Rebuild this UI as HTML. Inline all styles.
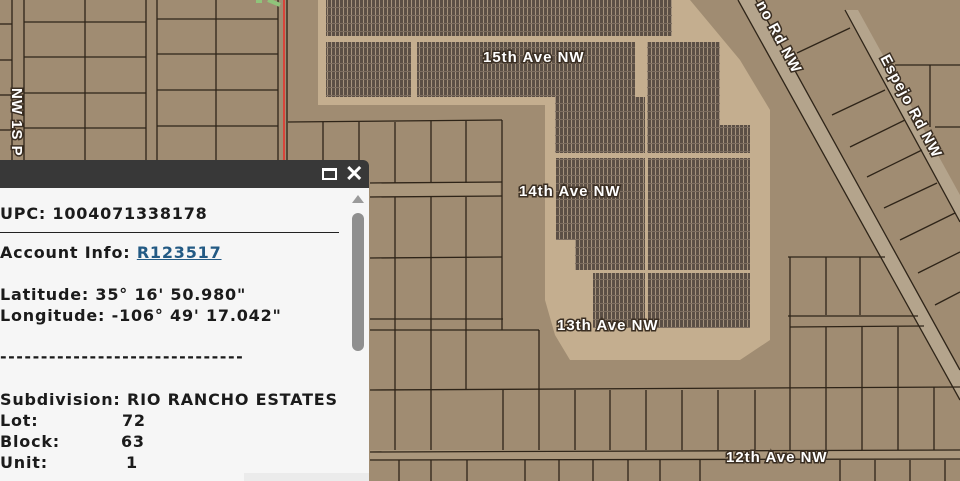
<!DOCTYPE html>
<html><head><meta charset="utf-8"><style>
html,body{margin:0;padding:0;width:960px;height:481px;overflow:hidden;background:#9e8a70;font-family:"Liberation Sans",sans-serif}
svg{position:absolute;left:0;top:0}
.lbl{font-family:"Liberation Sans",sans-serif;font-size:15px;letter-spacing:1px;fill:#fff;stroke:#3a2e22;stroke-width:3px;paint-order:stroke;font-weight:bold}
#pop{position:absolute;left:0;top:160px;width:369px;height:321px}
#hd{position:absolute;left:0;top:0;width:369px;height:28px;background:#383838;border-top-right-radius:6px}
#bd{position:absolute;left:0;top:28px;width:369px;height:293px;background:#f6f6f6}
.t{position:absolute;left:0;font-family:"DejaVu Sans",sans-serif;font-size:16px;letter-spacing:0.8px;font-weight:bold;color:#1b1b1b;line-height:21px;white-space:pre}
a{color:#235a84}
</style></head><body>
<svg width="960" height="481" viewBox="0 0 960 481">
<defs>
<pattern id="pn" width="4" height="8" patternUnits="userSpaceOnUse">
<rect width="4" height="8" fill="#5b4f45"/><rect x="3" width="1" height="8" fill="#a4927c"/><rect y="7" width="4" height="1" fill="#7d6e60"/>
</pattern>
</defs>
<rect width="960" height="481" fill="#a08c72"/>
<path d="M318 0 H690 L740 60 L770 110 L770 340 L740 360 H570 L555 335 L545 300 L545 105 L318 105 Z" fill="#c4ae8f"/>
<g fill="url(#pn)">
<rect x="326" y="0" width="346" height="36"/>
<rect x="326" y="42" width="85" height="55"/>
<rect x="417" y="42" width="218" height="55"/>
<rect x="555" y="97" width="90" height="56"/>
<rect x="647" y="42" width="73" height="84"/>
<rect x="647" y="125" width="103" height="28"/>
<rect x="556" y="158" width="89" height="82"/>
<rect x="575" y="240" width="70" height="30"/>
<rect x="648" y="158" width="102" height="112"/>
<rect x="593" y="273" width="52" height="55"/>
<rect x="648" y="273" width="102" height="55"/>
</g>
<path d="M738 0 L756 0 L960 370 L960 400 Z" fill="#b4a48c"/>
<path d="M845 10 L858 10 L960 195 L960 222 Z" fill="#b4a48c"/>
<rect x="370" y="183" width="130" height="13" fill="#aa977c"/>
<rect x="370" y="450" width="590" height="9" fill="#aa977c"/>
<g stroke="#2e2418" stroke-width="1.3" fill="none">
<line x1="12" y1="0" x2="12" y2="160"/><line x1="24" y1="0" x2="24" y2="160"/>
<line x1="85" y1="0" x2="85" y2="160"/><line x1="146" y1="0" x2="146" y2="160"/>
<line x1="157" y1="0" x2="157" y2="160"/><line x1="216" y1="0" x2="216" y2="160"/>
<line x1="278" y1="0" x2="278" y2="160"/><line x1="287" y1="0" x2="287" y2="160"/>
<line x1="24" y1="22" x2="146" y2="22"/><line x1="24" y1="57" x2="146" y2="57"/><line x1="24" y1="93" x2="146" y2="93"/><line x1="24" y1="128" x2="146" y2="128"/>
<line x1="157" y1="19" x2="278" y2="19"/><line x1="157" y1="54" x2="278" y2="54"/><line x1="157" y1="90" x2="278" y2="90"/><line x1="157" y1="126" x2="278" y2="126"/>
<line x1="0" y1="24" x2="12" y2="24"/><line x1="0" y1="60" x2="12" y2="60"/><line x1="0" y1="95" x2="12" y2="95"/><line x1="0" y1="130" x2="12" y2="130"/>
<line x1="288" y1="122" x2="502" y2="120"/>
<line x1="323" y1="122" x2="323" y2="160"/><line x1="359" y1="122" x2="359" y2="160"/><line x1="395" y1="122" x2="395" y2="183"/><line x1="431" y1="121" x2="431" y2="183"/><line x1="466" y1="121" x2="466" y2="183"/><line x1="502" y1="120" x2="502" y2="330"/>
<line x1="370" y1="183" x2="502" y2="182"/><line x1="370" y1="197" x2="502" y2="196"/>
<line x1="395" y1="197" x2="395" y2="450"/><line x1="431" y1="197" x2="431" y2="450"/><line x1="466" y1="197" x2="466" y2="390"/>
<line x1="370" y1="258" x2="502" y2="257"/>
<line x1="370" y1="319" x2="503" y2="319"/><line x1="370" y1="330" x2="539" y2="330"/>
<line x1="539" y1="330" x2="539" y2="450"/>
<line x1="370" y1="390" x2="960" y2="387"/>
<line x1="370" y1="452" x2="960" y2="450"/><line x1="370" y1="460" x2="960" y2="459"/>
<line x1="503" y1="390" x2="503" y2="450"/><line x1="575" y1="390" x2="575" y2="450"/><line x1="610" y1="390" x2="610" y2="450"/><line x1="646" y1="390" x2="646" y2="450"/><line x1="682" y1="390" x2="682" y2="450"/><line x1="718" y1="390" x2="718" y2="450"/><line x1="755" y1="390" x2="755" y2="450"/><line x1="790" y1="327" x2="790" y2="450"/><line x1="826" y1="327" x2="826" y2="450"/><line x1="862" y1="327" x2="862" y2="450"/><line x1="898" y1="327" x2="898" y2="450"/><line x1="934" y1="387" x2="934" y2="450"/>
<line x1="790" y1="257" x2="790" y2="327"/><line x1="826" y1="257" x2="826" y2="315"/><line x1="860" y1="257" x2="860" y2="315"/>
<line x1="788" y1="257" x2="885" y2="257"/><line x1="788" y1="316" x2="918" y2="316"/><line x1="790" y1="327" x2="924" y2="326"/>
<line x1="399" y1="460" x2="399" y2="481"/><line x1="431" y1="460" x2="431" y2="481"/><line x1="467" y1="460" x2="467" y2="481"/><line x1="525" y1="460" x2="525" y2="481"/><line x1="559" y1="460" x2="559" y2="481"/><line x1="593" y1="460" x2="593" y2="481"/><line x1="628" y1="460" x2="628" y2="481"/><line x1="660" y1="460" x2="660" y2="481"/><line x1="700" y1="460" x2="700" y2="481"/><line x1="840" y1="460" x2="840" y2="481"/><line x1="875" y1="460" x2="875" y2="481"/><line x1="910" y1="460" x2="910" y2="481"/><line x1="945" y1="460" x2="945" y2="481"/>
<line x1="738" y1="0" x2="960" y2="400"/><line x1="756" y1="0" x2="960" y2="370"/>
<line x1="845" y1="10" x2="960" y2="222"/>
<line x1="797" y1="53" x2="850" y2="28"/><line x1="832" y1="115" x2="885" y2="90"/><line x1="850" y1="147" x2="905" y2="120"/><line x1="867" y1="177" x2="922" y2="150"/><line x1="884" y1="208" x2="937" y2="183"/><line x1="900" y1="240" x2="955" y2="213"/><line x1="918" y1="273" x2="960" y2="252"/><line x1="935" y1="305" x2="960" y2="292"/>
<line x1="895" y1="65" x2="960" y2="65"/><line x1="930" y1="65" x2="930" y2="127"/><line x1="935" y1="127" x2="960" y2="127"/>
</g>
<line x1="284" y1="0" x2="284" y2="160" stroke="#d8443a" stroke-width="2"/>
<line x1="256" y1="0" x2="262" y2="0" stroke="#8fc47a" stroke-width="6"/>
<line x1="268" y1="0" x2="280" y2="5" stroke="#8fc47a" stroke-width="4"/>
<text class="lbl" x="483" y="62">15th Ave  NW</text>
<text class="lbl" x="519" y="196">14th Ave  NW</text>
<text class="lbl" x="557" y="330">13th Ave  NW</text>
<text class="lbl" x="726" y="462">12th Ave  NW</text>
<text class="lbl" transform="translate(756,4) rotate(62)">no Rd NW</text>
<text class="lbl" transform="translate(880,58) rotate(62)">Espejo Rd NW</text>
<text class="lbl" transform="translate(12,88) rotate(90)">NW 1S P</text>
</svg>
<div id="pop">
<div id="hd">
<div style="position:absolute;left:322px;top:8px;border:2px solid #fff;border-top-width:3px;box-sizing:border-box;width:15px;height:12px"></div>
<div style="position:absolute;left:345px;top:2px;color:#fff;font-size:22px;font-weight:bold;line-height:24px">✕</div>
</div>
<div id="bd">
<div style="position:absolute;left:0;top:44px;width:339px;height:1px;background:#222"></div>
<div style="position:absolute;left:352px;top:7px;width:0;height:0;border-left:6px solid transparent;border-right:6px solid transparent;border-bottom:8px solid #9a9a9a"></div>
<div style="position:absolute;left:352px;top:25px;width:12px;height:138px;border-radius:6px;background:#8f8f8f"></div>
<div style="position:absolute;left:244px;top:285px;width:125px;height:8px;background:#ebebeb"></div>
</div>
<div class="t" style="top:43px">UPC: 1004071338178</div>
<div class="t" style="top:82px">Account Info: <a href="#">R123517</a></div>
<div class="t" style="top:124px">Latitude: 35° 16' 50.980"
Longitude: -106° 49' 17.042"</div>
<div class="t" style="top:186px;letter-spacing:1.5px">------------------------------</div>
<div class="t" style="top:229px">Subdivision: RIO RANCHO ESTATES</div>
<div class="t" style="top:250px">Lot:</div><div class="t" style="top:250px;left:122px">72</div>
<div class="t" style="top:271px">Block:</div><div class="t" style="top:271px;left:121px">63</div>
<div class="t" style="top:292px">Unit:</div><div class="t" style="top:292px;left:126px">1</div>
</div>
</body></html>
